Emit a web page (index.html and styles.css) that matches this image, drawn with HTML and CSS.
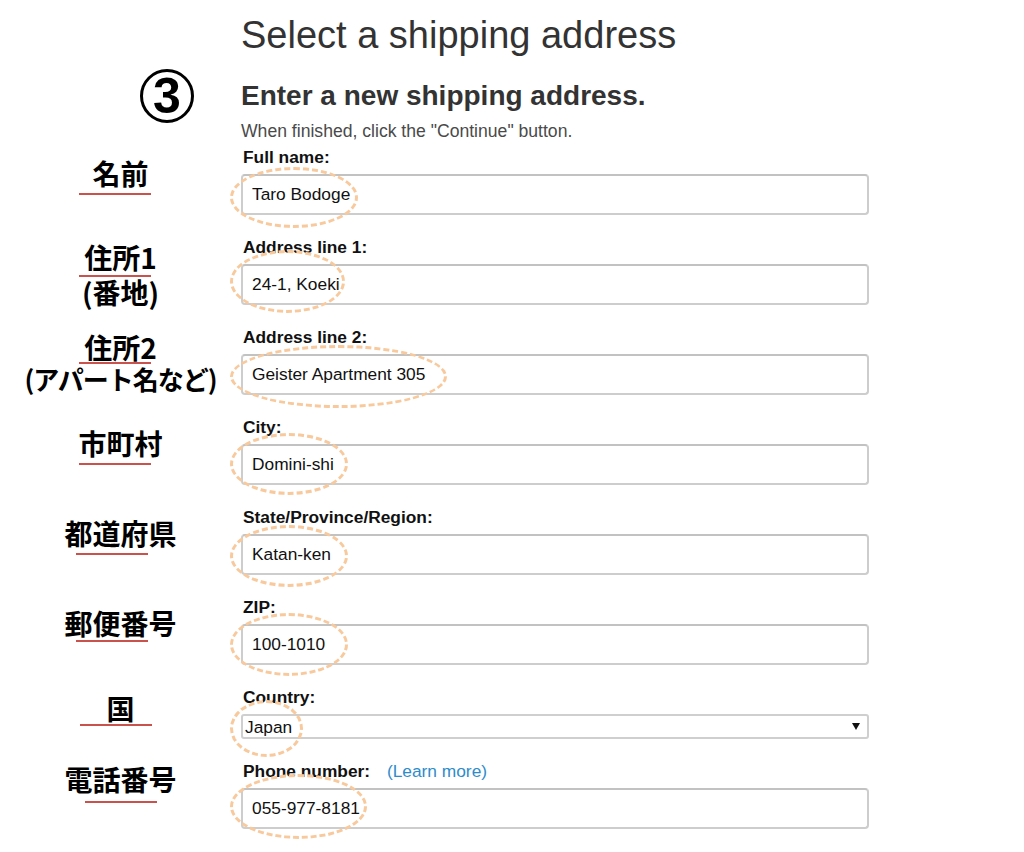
FILE: index.html
```html
<!DOCTYPE html>
<html lang="en">
<head>
  <meta charset="UTF-8">
  <meta name="viewport" content="width=device-width, initial-scale=1.0">
  <title>Select a shipping address</title>
  <link rel="stylesheet" href="styles.css">
</head>
<body>
  <main class="page">
    <div class="row">
      <div></div>
      <h1 class="title">Select a shipping address</h1>
    </div>

    <div class="row heading-row">
      <div class="step-cell"><span class="step">3</span></div>
      <h2 class="heading">Enter a new shipping address.</h2>
    </div>

    <div class="row">
      <div></div>
      <p class="hint">When finished, click the "Continue" button.</p>
    </div>

    <form class="address-form">
      <div class="row field-row">
        <div class="jp"><span class="jp-main">名前</span><span class="jp-ul"></span></div>
        <div class="field">
          <label class="field-label" for="fullName">Full name:</label>
          <input class="text-input" type="text" id="fullName" value="Taro Bodoge">
          <span class="mark mark--name"></span>
        </div>
      </div>

      <div class="row field-row">
        <div class="jp jp--two"><span class="jp-main">住所1</span><span class="jp-ul"></span><span class="jp-sub">(番地)</span></div>
        <div class="field">
          <label class="field-label" for="addr1">Address line 1:</label>
          <input class="text-input" type="text" id="addr1" value="24-1, Koeki">
          <span class="mark mark--addr1"></span>
        </div>
      </div>

      <div class="row field-row">
        <div class="jp jp--two jp--tight"><span class="jp-main">住所2</span><span class="jp-ul"></span><span class="jp-sub">(アパート名など)</span></div>
        <div class="field">
          <label class="field-label" for="addr2">Address line 2:</label>
          <input class="text-input" type="text" id="addr2" value="Geister Apartment 305">
          <span class="mark mark--addr2"></span>
        </div>
      </div>

      <div class="row field-row">
        <div class="jp"><span class="jp-main">市町村</span><span class="jp-ul"></span></div>
        <div class="field">
          <label class="field-label" for="city">City:</label>
          <input class="text-input" type="text" id="city" value="Domini-shi">
          <span class="mark mark--city"></span>
        </div>
      </div>

      <div class="row field-row">
        <div class="jp jp--shift"><span class="jp-main">都道府県</span><span class="jp-ul"></span></div>
        <div class="field">
          <label class="field-label" for="state">State/Province/Region:</label>
          <input class="text-input" type="text" id="state" value="Katan-ken">
          <span class="mark mark--state"></span>
        </div>
      </div>

      <div class="row field-row">
        <div class="jp jp--shift jp--close"><span class="jp-main">郵便番号</span><span class="jp-ul"></span></div>
        <div class="field">
          <label class="field-label" for="zip">ZIP:</label>
          <input class="text-input" type="text" id="zip" value="100-1010">
          <span class="mark mark--zip"></span>
        </div>
      </div>

      <div class="row field-row">
        <div class="jp jp--country"><span class="jp-main">国</span><span class="jp-ul"></span></div>
        <div class="field">
          <label class="field-label" for="country">Country:</label>
          <div class="select-wrap">
            <select class="select" id="country">
              <option>Japan</option>
            </select>
          </div>
          <span class="mark mark--country"></span>
        </div>
      </div>

      <div class="row field-row">
        <div class="jp jp--phone"><span class="jp-main">電話番号</span><span class="jp-ul"></span></div>
        <div class="field">
          <label class="field-label" for="phone">Phone number: <a class="learn" href="#">(Learn more)</a></label>
          <input class="text-input" type="text" id="phone" value="055-977-8181">
          <span class="mark mark--phone"></span>
        </div>
      </div>
    </form>
  </main>
</body>
</html>
```

FILE: styles.css
```css
body{
  margin: 0;
  background: #fff;
  color: #111;
  font-family: "Liberation Sans", Arial, sans-serif;
}

.page{
  padding-top: 13px;
}

.row{
  display: grid;
  grid-template-columns: 241px 628px;
}

.title{
  margin: 0;
  font-size: 38px;
  font-weight: 400;
  line-height: 44px;
  color: #333;
}

.heading-row{
  margin-top: 22px;
  align-items: center;
}
.heading{
  margin: 0;
  font-size: 28px;
  font-weight: 700;
  line-height: 34px;
  color: #333;
}
.step-cell{
  display: flex;
  justify-content: flex-end;
  padding-right: 47px;
}
.step{
  display: flex;
  align-items: center;
  justify-content: center;
  box-sizing: border-box;
  width: 54px;
  height: 54px;
  margin: -10px 0;
  border: 3px solid #000;
  border-radius: 50%;
  color: #000;
  font-size: 50px;
  font-weight: 700;
  line-height: 1;
}

.hint{
  margin: 8px 0 0;
  font-size: 17.6px;
  line-height: 20px;
  color: #4a4a4a;
}

.address-form{
  margin-top: 6px;
}

/* japanese notes on the left */
.jp{
  padding-top: 10px;
  text-align: center;
  color: #000;
  font-family: "Noto Sans CJK JP", "Noto Sans", sans-serif;
  font-size: 28px;
  font-weight: 700;
}
.jp-main{
  display: block;
  line-height: 32px;
}
.jp-ul{
  display: block;
  width: 72px;
  height: 2px;
  margin: 4px 0 0 79px;
  background: #c9534c;
}
.jp-sub{
  display: block;
  line-height: 30px;
}
.jp--two{
  padding-top: 5px;
}
.jp--two .jp-main{
  line-height: 30px;
}
.jp--two .jp-ul{
  margin-top: 3px;
}
.jp--tight .jp-ul{
  margin-top: 0;
}
.jp--tight .jp-sub{
  font-size: 26px;
  letter-spacing: -1px;
}
.jp--shift .jp-ul{
  margin-left: 76px;
}
.jp--close .jp-ul{
  margin-top: 1px;
}
.jp--country{
  padding-top: 5px;
}
.jp--country .jp-ul{
  margin: 0 0 0 80px;
}
.jp--phone{
  padding-top: 2px;
}
.jp--phone .jp-ul{
  margin: 6px 0 0 85px;
}

/* form fields */
.field{
  position: relative;
  padding-bottom: 22px;
}
.field-label{
  display: block;
  margin: 0 0 7px 2px;
  font-size: 17.33px;
  font-weight: 700;
  line-height: 20px;
  color: #111;
}
.learn{
  margin-left: 12px;
  font-weight: 400;
  color: #2e8ccb;
  text-decoration: none;
}
.text-input{
  display: block;
  box-sizing: border-box;
  width: 100%;
  height: 41px;
  margin: 0;
  padding: 0 9px;
  border: 2px solid #cdcdcd;
  border-top-color: #c2c2c2;
  border-radius: 4px;
  background: #fff;
  color: #111;
  font-family: "Liberation Sans", Arial, sans-serif;
  font-size: 17.33px;
}

.select-wrap{
  position: relative;
}
.select-wrap::after{
  content: "";
  position: absolute;
  right: 9px;
  top: 9px;
  border-left: 4px solid transparent;
  border-right: 4px solid transparent;
  border-top: 7px solid #111;
}
.select{
  appearance: none;
  display: block;
  box-sizing: border-box;
  width: 100%;
  height: 25px;
  margin: 0;
  padding: 0 30px 0 2px;
  border: 2px solid #cfcfcf;
  border-radius: 3px;
  background: #fff;
  color: #111;
  font-family: "Liberation Sans", Arial, sans-serif;
  font-size: 17.33px;
}

/* dashed rings drawn over the values */
.mark{
  position: absolute;
  left: -11px;
  box-sizing: border-box;
  border: 3px dashed #f8c99c;
  border-radius: 50%;
  pointer-events: none;
}
.mark--name{ top: 20px; width: 128px; height: 61px; }
.mark--addr1{ top: 13px; width: 115px; height: 63px; }
.mark--addr2{ top: 18px; width: 217px; height: 63px; }
.mark--city{ top: 16px; width: 118px; height: 62px; }
.mark--state{ top: 18px; width: 118px; height: 62px; }
.mark--zip{ top: 16px; width: 118px; height: 63px; }
.mark--country{ top: 13px; width: 73px; height: 57px; }
.mark--phone{ top: 13px; width: 137px; height: 65px; }
```
